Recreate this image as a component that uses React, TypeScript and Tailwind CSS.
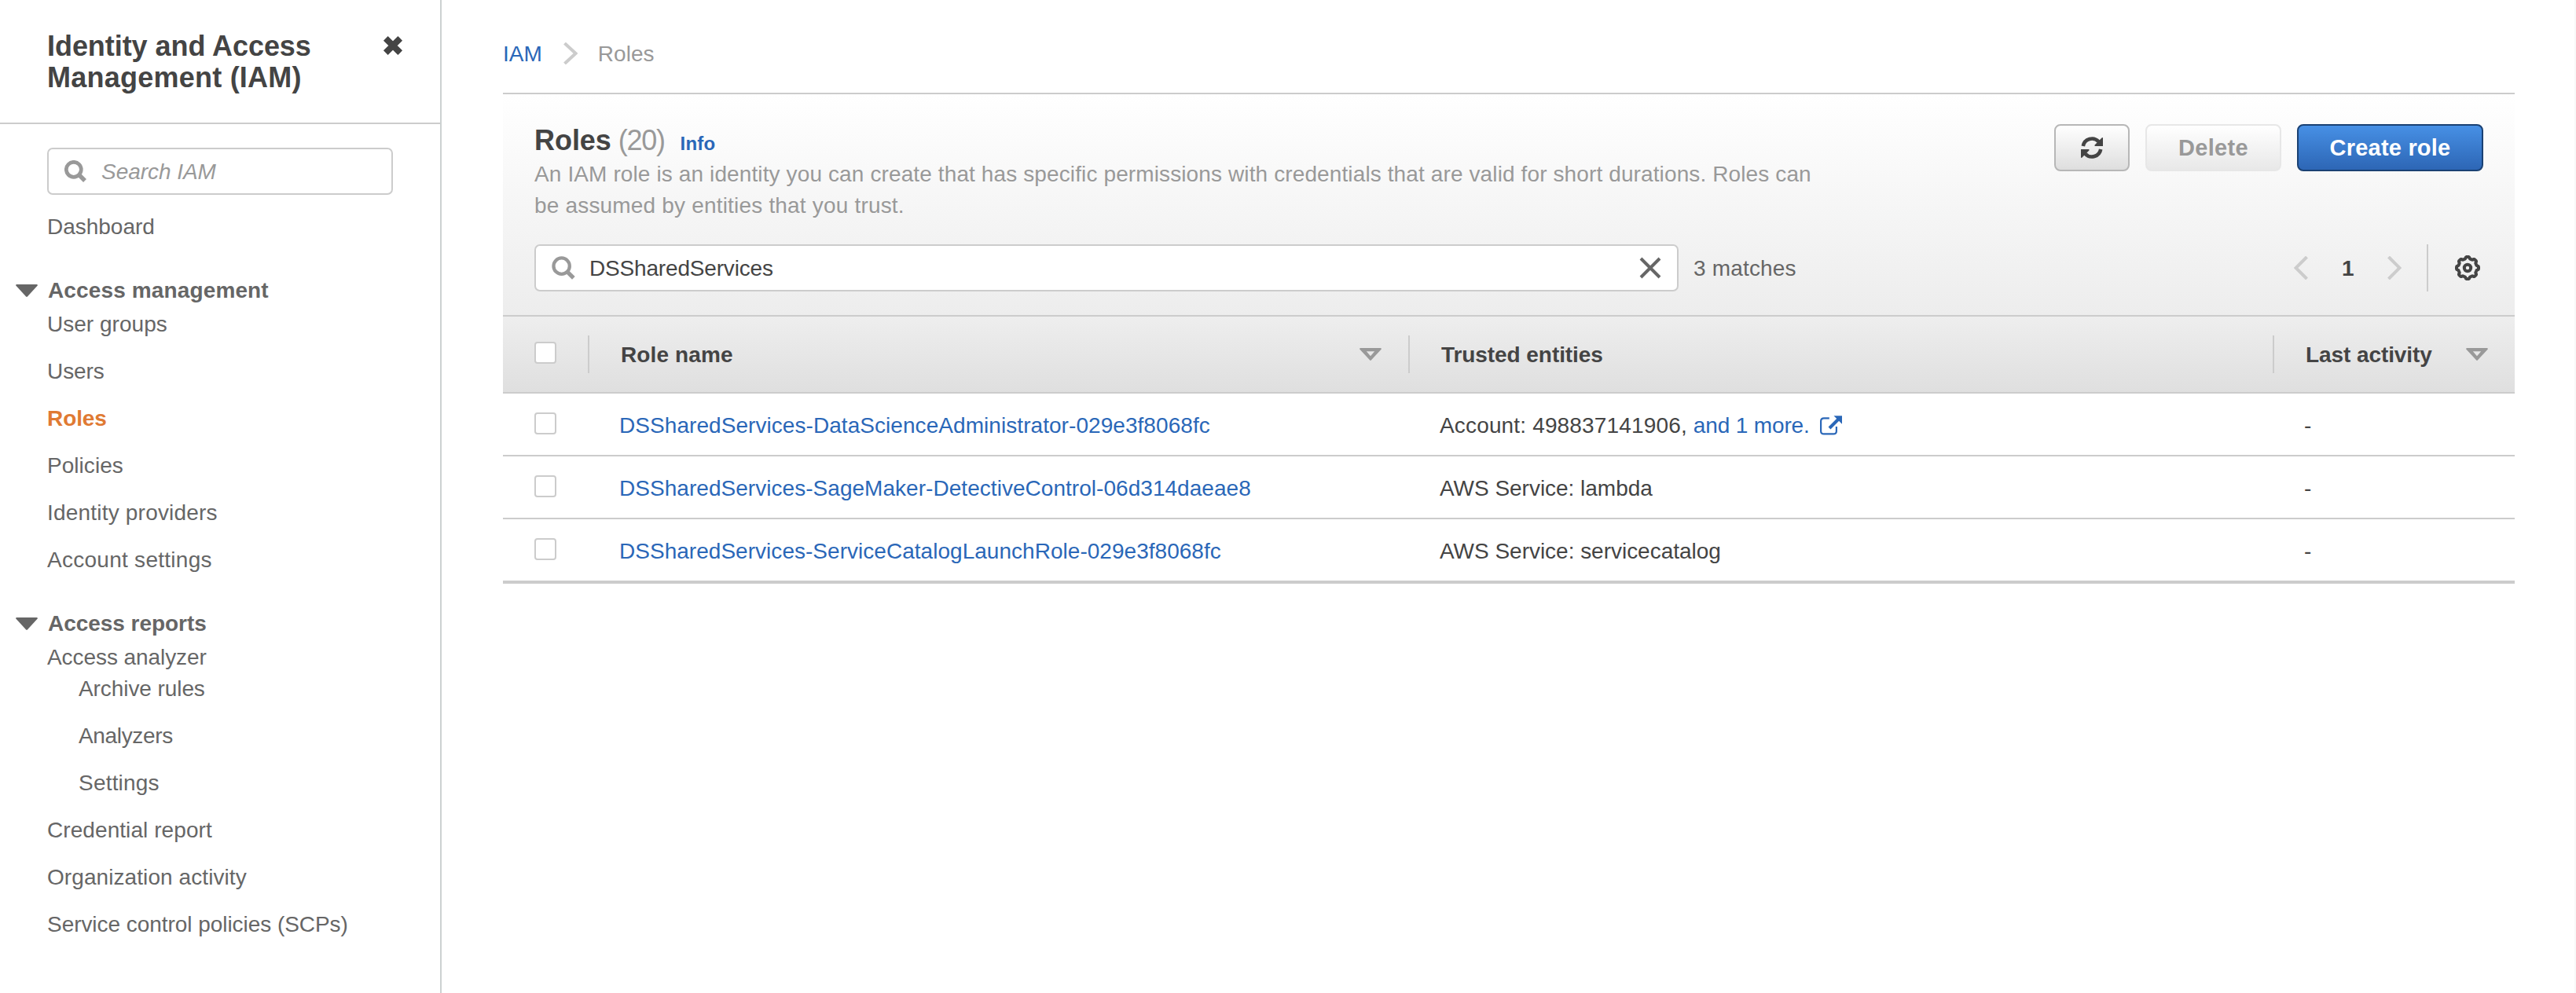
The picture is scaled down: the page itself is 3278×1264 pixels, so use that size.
import React from "react";

function Search({ w, sw }: { w: number; sw: number }) {
  return (
    <svg width={w} height={w} viewBox="0 0 28 28" fill="none" stroke="#999" strokeWidth={sw} className="shrink-0">
      <circle cx="11.800" cy="11.800" r="9.500" />
      <path d="M18.500 18.500L26 26" strokeWidth={sw + 0.8} />
    </svg>
  );
}

function Item({ t, w, first, sub, active }: { t: string; w: number; first?: boolean; sub?: boolean; active?: boolean }) {
  return (
    <a className={`flex h-10 leading-[42px] ${first ? "" : "mt-5"} ${sub ? "ml-[100px]" : "ml-[60px]"} ${active ? "font-bold text-[#e07a33]" : "text-[#666]"}`}>
      <T w={w}>{t}</T>
    </a>
  );
}

const BEARING = 1.2;

/* Text tracked so that its advance width is exactly w. */
function T({ w, children }: { w: number; children: string }) {
  const ref = React.useRef<HTMLSpanElement>(null);
  const [ls, setLs] = React.useState(0);
  React.useLayoutEffect(() => {
    if (ref.current) setLs((w - BEARING - ref.current.getBoundingClientRect().width) / children.length);
  }, []);
  return (
    <span ref={ref} className="whitespace-pre" style={{ letterSpacing: ls }}>
      {children}
    </span>
  );
}

function Section({ t, w }: { t: string; w: number }) {
  return (
    <div className="flex h-10 items-center pl-5 font-bold leading-10 text-[#666]">
      <svg width="28" height="16" viewBox="0 0 28 16" fill="#666" className="mr-[13px]">
        <path d="M1 0h26q1.500 .6.500 1.800L14.900 15.500q-.9.800-1.800 0L.5 1.800Q-.5.600 1 0z" />
      </svg>
      <T w={w}>{t}</T>
    </div>
  );
}

function Check() {
  return <span className="block h-7 w-7 rounded-[4px] border-2 border-[#ccc] bg-white" />;
}

function Sort() {
  return (
    <svg width="28" height="16" viewBox="0 0 28 16" fill="#999" fillRule="evenodd" className="mt-[-2px]">
      <path d="M1 0h26q1.400.5.600 1.700L15 15.300q-1 1.200-2 0L.4 1.700Q-.4.500 1 0zM8.800 4.300L14 10.300l5.200-6z" />
    </svg>
  );
}

function Chevron({ left, w, h, sw }: { left?: boolean; w: number; h: number; sw: number }) {
  return (
    <svg width={w} height={h} viewBox={`0 0 ${w} ${h}`} fill="none" stroke="#ccc" strokeWidth={sw}>
      <path d={left ? `M${w - 1.5} 1L2.500 ${h / 2}L${w - 1.5} ${h - 1}` : `M1.500 1L${w - 2.5} ${h / 2}L1.500 ${h - 1}`} />
    </svg>
  );
}

function gearPath() {
  let d = "";
  const n = 128;
  for (let i = 0; i < n; i++) {
    const a = (i / n) * Math.PI * 2;
    const c = Math.cos(8 * a);
    const r = 12.9 + 1.1 * Math.max(-1, Math.min(1, c * 2));
    d += `${i ? "L" : "M"}${(16 + r * Math.cos(a)).toFixed(2)} ${(16 + r * Math.sin(a)).toFixed(2)}`;
  }
  return d + "z";
}

const rows = [
  { n: "DSSharedServices-DataScienceAdministrator-029e3f8068fc", w: 753, e: "Account: 498837141906, ", ew: 324 },
  { n: "DSSharedServices-SageMaker-DetectiveControl-06d314daeae8", w: 805, e: "AWS Service: lambda", ew: 272 },
  { n: "DSSharedServices-ServiceCatalogLaunchRole-029e3f8068fc", w: 767, e: "AWS Service: servicecatalog", ew: 359 },
];

export default function App() {
  return (
    <div className="flex h-[1264px] w-[3278px] overflow-hidden border-r-2 border-[#f8f8f8] bg-white font-['Liberation_Sans',sans-serif] text-[28px] text-[#444]">
      <aside className="w-[562px] shrink-0 border-r-2 border-[#ccd1d1]">
        <header className="flex h-[158px] justify-between border-b-2 border-[#ccc] pl-[60px] pr-[47px] pt-[39px]">
          <h1 className="text-[36px] font-bold leading-10">
            <T w={337}>Identity and Access</T>
            <br />
            <T w={325}>Management (IAM)</T>
          </h1>
          <svg width="26" height="26" viewBox="0 0 26 26" stroke="#444" strokeWidth="8" className="mt-[6px]">
            <path d="M3.800 3.800l18.400 18.400M22.200 3.800L3.800 22.200" />
          </svg>
        </header>
        <div className="ml-[60px] mt-[30px] flex h-[60px] w-[440px] items-center rounded-[7px] border-2 border-[#ccc] pl-5 italic text-[#999]">
          <Search w={28} sw={4.7} />
          <span className="ml-[19px] flex pt-[2px] leading-10">
            <T w={147}>Search IAM</T>
          </span>
        </div>
        <nav className="pt-5">
          <Item t="Dashboard" w={138} first />
          <div className="h-[42px]" />
          <Section t="Access management" w={282} />
          <div className="h-[2px]" />
          <Item t="User groups" w={154} first />
          <Item t="Users" w={74} />
          <Item t="Roles" w={77} active />
          <Item t="Policies" w={98} />
          <Item t="Identity providers" w={218} />
          <Item t="Account settings" w={211} />
          <div className="h-[42px]" />
          <Section t="Access reports" w={203} />
          <div className="h-[2px]" />
          <Item t="Access analyzer" w={204} first />
          <Item t="Archive rules" w={162} first sub />
          <Item t="Analyzers" w={121} sub />
          <Item t="Settings" w={104} sub />
          <Item t="Credential report" w={211} />
          <Item t="Organization activity" w={255} />
          <Item t="Service control policies (SCPs)" w={384} />
        </nav>
      </aside>

      <main className="ml-[78px] w-[2560px] shrink-0">
        <div className="flex h-[118px] items-center pt-[18px] leading-10">
          <span className="flex pt-[2px] text-[#2a67b8]">
            <T w={51}>IAM</T>
          </span>
          <span className="ml-[27px]">
            <Chevron w={18} h={28} sw={4} />
          </span>
          <span className="ml-[26px] flex pt-[2px] text-[#999]">
            <T w={73}>Roles</T>
          </span>
        </div>

        <section className="h-[283px] border-t-2 border-[#ccc] bg-linear-to-b from-white to-[#ededed] px-10">
          <div className="flex justify-between pt-[38px]">
            <div className="pt-[1px]">
              <h2 className="flex h-[43px] items-baseline leading-10">
                <span className="text-[36px] font-bold">
                  <T w={99}>Roles</T>
                </span>
                <span className="ml-[9px] text-[36px] text-[#999]">
                  <T w={60}>(20)</T>
                </span>
                <span className="ml-5 text-[24px] font-bold text-[#2a67b8]">
                  <T w={46}>Info</T>
                </span>
              </h2>
              <p className="flex h-20 flex-col leading-10 text-[#999]">
                <span>
                  <T w={1626}>An IAM role is an identity you can create that has specific permissions with credentials that are valid for short durations. Roles can</T>
                </span>
                <span>
                  <T w={472}>be assumed by entities that you trust.</T>
                </span>
              </p>
            </div>
            <div className="flex h-[60px] gap-5 font-bold">
              <button className="flex w-24 items-center justify-center rounded-[8px] border-2 border-[#b7b7b7] bg-linear-to-b from-white to-[#dedede]">
                <svg width="28" height="28" viewBox="0 0 28 28" fill="none" stroke="#444" strokeWidth="4.600">
                  <path d="M2.800 12A11.400 11.400 0 0 1 22.500 6.300M25.200 16A11.400 11.400 0 0 1 5.500 21.700" />
                  <path d="M28 1.500V12H18q-1.200-.6-.4-1.500L26.500 1.500q1-.8 1.500 0zM0 26.500V16H10q1.200.6.4 1.500L1.500 26.500q-1 .8-1.500 0z" fill="#444" stroke="none" />
                </svg>
              </button>
              <button className="flex w-[173px] items-center justify-center rounded-[8px] border-2 border-[#e7e7e7] bg-linear-to-b from-white to-[#e8e8e8] text-[29px] leading-10 text-[#999]">
                <T w={90}>Delete</T>
              </button>
              <button className="flex w-[237px] items-center justify-center rounded-[8px] border-2 border-[#1a4173] bg-linear-to-b from-[#4790e5] to-[#2d66b5] text-[29px] leading-10 text-white">
                <T w={155}>Create role</T>
              </button>
            </div>
          </div>

          <div className="mt-[29px] flex h-[60px] items-center">
            <div className="flex h-[60px] w-[1456px] items-center rounded-[7px] border-2 border-[#ccc] bg-white px-5">
              <Search w={30} sw={4} />
              <span className="ml-[18px] flex pt-[2px] leading-10">
                <T w={235}>DSSharedServices</T>
              </span>
              <svg width="28" height="28" viewBox="0 0 28 28" stroke="#666" strokeWidth="4" className="ml-auto">
                <path d="M2 2l24 24M26 2L2 26" />
              </svg>
            </div>
            <span className="ml-[19px] flex pt-[2px] leading-10 text-[#666]">
              <T w={132}>3 matches</T>
            </span>
            <div className="ml-auto flex h-[60px] items-center pr-1">
              <Chevron left w={18} h={30} sw={4} />
              <span className="ml-[43px] w-[58px] pt-[2px] font-bold leading-10">1</span>
              <Chevron w={18} h={30} sw={4} />
              <span className="ml-8 h-[60px] w-[2px] bg-[#ccc]" />
              <svg width="32" height="32" viewBox="0 0 32 32" fill="none" stroke="#444" strokeWidth="4" className="ml-[34px]">
                <path d={gearPath()} strokeLinejoin="round" />
                <circle cx="16" cy="16" r="4.200" />
              </svg>
            </div>
          </div>
        </section>

        <div className="flex h-[100px] items-center border-y-2 border-[#ccc] bg-linear-to-b from-[#eee] to-[#dfdfdf] font-bold leading-10">
          <div className="mt-[-4px] w-[108px] pl-10">
            <Check />
          </div>
          <div className="flex h-12 w-[1044px] items-center border-l-2 border-[#ccc] pl-10 pr-[34px] pt-[2px]">
            <T w={144}>Role name</T>
            <span className="ml-auto">
              <Sort />
            </span>
          </div>
          <div className="flex h-12 w-[1100px] items-center border-l-2 border-[#ccc] pl-10 pt-[2px]">
            <T w={207}>Trusted entities</T>
          </div>
          <div className="flex h-12 w-[308px] items-center border-l-2 border-[#ccc] pl-10 pr-[34px] pt-[2px]">
            <T w={162}>Last activity</T>
            <span className="ml-auto">
              <Sort />
            </span>
          </div>
        </div>

        {rows.map((r, i) => (
          <div key={i} className={`flex items-center border-[#ccc] pt-1 leading-10 ${i === 2 ? "h-[82px] border-b-4" : "h-20 border-b-2"}`}>
            <div className="mt-[-6px] w-[148px] pl-10">
              <Check />
            </div>
            <div className="flex w-[1044px] text-[#2a67b8]">
              <T w={r.w}>{r.n}</T>
            </div>
            <div className="flex w-[1100px] items-center">
              <T w={r.ew}>{r.e}</T>
              {i === 0 && (
                <span className="flex items-center text-[#2a67b8]">
                  <T w={149}>and 1 more.</T>
                  <svg width="28" height="25" viewBox="0 0 28 25" fill="none" stroke="#2a67b8" strokeWidth="2.200" className="ml-[13px] mt-[-2px]">
                    <path d="M11.800 3.300H5Q1.100 3.300 1.100 7V19.700Q1.100 23.400 5 23.400H17Q20.900 23.400 20.900 19.700V14" />
                    <path d="M12 16L24 4" strokeWidth="4" />
                    <path d="M17.500.2H28v10.500z" fill="#2a67b8" stroke="none" />
                  </svg>
                </span>
              )}
            </div>
            <span>-</span>
          </div>
        ))}
      </main>
    </div>
  );
}
